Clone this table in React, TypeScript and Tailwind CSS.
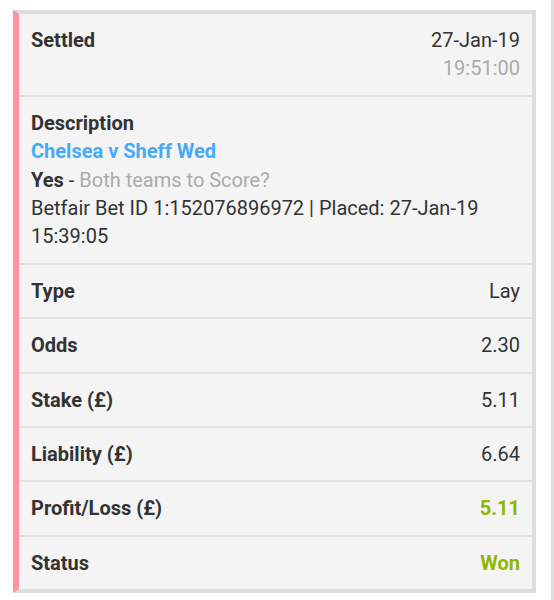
const rows = [
  { label: "Type", value: "Lay" },
  { label: "Odds", value: "2.30" },
  { label: "Stake (£)", value: "5.11" },
  { label: "Liability (£)", value: "6.64" },
  { label: "Profit/Loss (£)", value: "5.11", win: true },
  { label: "Status", value: "Won", win: true },
];

export default function App() {
  return (
    <div
      className="w-[554px] h-[600px] bg-white border-r-[3px] border-[#dedede] pl-[13px] pr-[15px] pt-[10px]"
      style={{ fontFamily: "Roboto, 'Noto Sans', sans-serif" }}
    >
      <div className="bg-[#f4f4f4] border-t-4 border-r-4 border-b-4 border-l-[6px] border-t-[#dddddd] border-r-[#dddddd] border-b-[#dddddd] border-l-[#ff91a6] text-[20px] leading-[28.4px] text-[#333333]">
        {/* settled */}
        <div className="flex justify-between pl-[12px] pr-3 py-3 border-b-2 border-[#e2e2e2]">
          <div className="font-bold">Settled</div>
          <div className="text-right">
            <div>27-Jan-19</div>
            <div className="text-[#ababab]">19:51:00</div>
          </div>
        </div>

        {/* description */}
        <div className="pl-[12px] pr-3 py-3 border-b-2 border-[#e2e2e2]">
          <div className="font-bold">Description</div>
          <div className="font-bold text-[#45abf7]">Chelsea v Sheff Wed</div>
          <div>
            <span className="font-bold">Yes</span> -{" "}
            <span className="text-[#ababab]">Both teams to Score?</span>
          </div>
          <div className="pr-4">
            Betfair Bet ID 1:152076896972 | Placed: 27-Jan-19 15:39:05
          </div>
        </div>

        {rows.map((r, i) => (
          <div
            key={r.label}
            className={`flex justify-between pl-[12px] pr-3 py-3 ${
              i < rows.length - 1 ? "border-b-2 border-[#e2e2e2]" : ""
            }`}
          >
            <div className="font-bold">{r.label}</div>
            <div className={r.win ? "font-bold text-[#8fb800]" : ""}>{r.value}</div>
          </div>
        ))}
      </div>
    </div>
  );
}
